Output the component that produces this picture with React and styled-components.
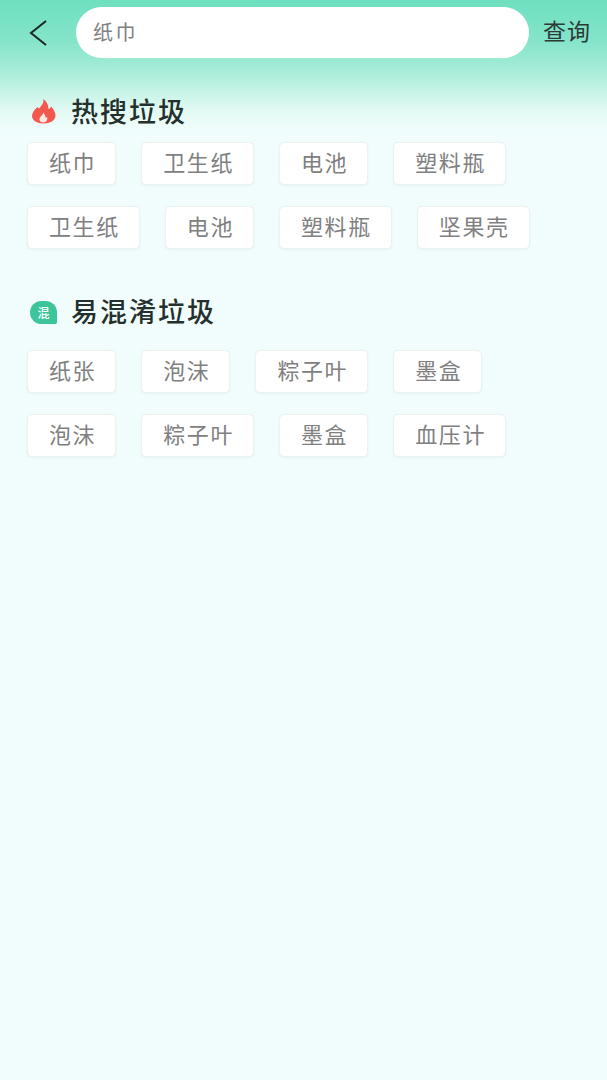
import React from "react";
import styled, { createGlobalStyle } from "styled-components";

const Global = createGlobalStyle`
  html, body { margin: 0; padding: 0; background: #f0fdfc; }
  * { box-sizing: border-box; }
`;

const Page = styled.div`
  width: 607px;
  height: 1080px;
  overflow: hidden;
  font-family: "Noto Sans CJK SC", "Noto Sans", sans-serif;
  background: linear-gradient(180deg, #6ee0bf 0px, #84e4ca 40px, #a6ecd8 70px, #cdf5e9 96px, #e6fbf5 114px, #f0fdfc 132px, #f0fdfc 100%);
`;

const TopBar = styled.header`
  display: flex;
  align-items: center;
  height: 51px;
  margin-top: 7px;
  padding-left: 28px;
`;

const BackButton = styled.button`
  width: 48px;
  height: 51px;
  padding: 0;
  border: 0;
  background: none;
  display: flex;
  align-items: center;
`;

const SearchBox = styled.div`
  width: 453px;
  height: 51px;
  border-radius: 26px;
  background: #fff;
  padding: 0 0 2px 17px;
  display: flex;
  align-items: center;
  font-size: 20px;
  letter-spacing: 2.5px;
  color: #808080;
`;

const QueryButton = styled.span`
  margin: 0 0 5px 14px;
  font-size: 23px;
  line-height: 32px;
  letter-spacing: 1px;
  color: #2c3a36;
  white-space: nowrap;
`;

const Section = styled.section`
  padding-left: 27px;
  margin-top: ${(p) => p.$top}px;
`;

const Heading = styled.div`
  display: flex;
  align-items: center;
  height: 34px;
  margin-bottom: ${(p) => p.$gap}px;
`;

const HeadingIcon = styled.span`
  width: 44px;
  height: 34px;
  display: flex;
  align-items: center;
  padding-left: 3px;
`;

const HeadingText = styled.h2`
  margin: 0 0 2px;
  font-size: 27px;
  line-height: 34px;
  font-weight: 500;
  letter-spacing: 2px;
  color: #25302d;
`;

const TagGrid = styled.div`
  display: flex;
  flex-wrap: wrap;
  gap: 21px 25px;
  width: 560px;
`;

const Tag = styled.div`
  height: 43px;
  padding: 0 19px 5px 21px;
  background: #fff;
  border: 1px solid #ebf3f1;
  border-radius: 5px;
  box-shadow: 0 1px 2px rgba(120, 150, 145, 0.1);
  display: flex;
  align-items: center;
  font-size: 22px;
  letter-spacing: 1.6px;
  color: #808080;
  white-space: nowrap;
`;

const FlameSvg = styled.svg`
  margin: 0 0 2px 2px;
`;

const Flame = () => (
  <FlameSvg width="24" height="25" viewBox="0 0 24 25">
    <path
      fill="#f4574e"
      d="M11 0C12.500 3 10 6 8 8.500C7 9.800 6.300 9.500 5.500 8C2.500 10.500 0 13.500 0 17C0 21.500 5 24.500 11.500 24.500C18 24.500 23.500 21.500 23.500 16.500C23.500 13 21 9.500 19 7.500C18.500 9 17.800 9.800 16.500 10C16.500 6 14.500 2 11 0Z"
    />
    <path
      fill="#fde8e2"
      d="M11 13.500C11.500 15 9.500 16.500 8.200 18C6.500 20.500 8 23.500 11.200 23.500C14.500 23.500 16 20.500 15 18C14.500 18.600 14 18.800 13.500 18.800C13.500 16.500 12.500 14.500 11 13.500Z"
    />
  </FlameSvg>
);

const MixBadge = styled.span`
  width: 27px;
  height: 23px;
  background: #3cc49b;
  border-radius: 12px 12px 2px 12px;
  color: #fff;
  font-size: 12px;
  font-weight: 500;
  display: flex;
  align-items: center;
  justify-content: center;
`;

const sections = [
  {
    top: 37,
    gap: 13,
    title: "热搜垃圾",
    icon: <Flame />,
    tags: ["纸巾", "卫生纸", "电池", "塑料瓶", "卫生纸", "电池", "塑料瓶", "坚果壳"],
  },
  {
    top: 46,
    gap: 21,
    title: "易混淆垃圾",
    icon: <MixBadge>混</MixBadge>,
    tags: ["纸张", "泡沫", "粽子叶", "墨盒", "泡沫", "粽子叶", "墨盒", "血压计"],
  },
];

export default function App() {
  return (
    <Page>
      <Global />
      <TopBar>
        <BackButton aria-label="返回">
          <svg width="20" height="28" viewBox="0 0 20 28" fill="none">
            <path d="M18 2 L3 14 L18 26" stroke="#1c2624" strokeWidth="2" />
          </svg>
        </BackButton>
        <SearchBox>纸巾</SearchBox>
        <QueryButton>查询</QueryButton>
      </TopBar>
      {sections.map((s) => (
        <Section key={s.title} $top={s.top}>
          <Heading $gap={s.gap}>
            <HeadingIcon>{s.icon}</HeadingIcon>
            <HeadingText>{s.title}</HeadingText>
          </Heading>
          <TagGrid>
            {s.tags.map((t, i) => (
              <Tag key={i}>{t}</Tag>
            ))}
          </TagGrid>
        </Section>
      ))}
    </Page>
  );
}
